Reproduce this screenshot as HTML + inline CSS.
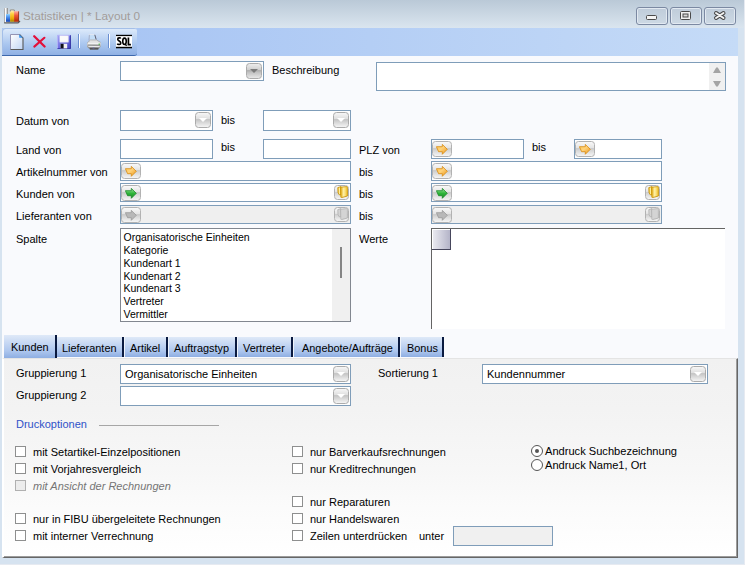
<!DOCTYPE html>
<html><head><meta charset="utf-8">
<style>
*{margin:0;padding:0;box-sizing:border-box}
html,body{width:745px;height:565px;overflow:hidden}
body{position:relative;background:#d6e3f0;font-family:"Liberation Sans",sans-serif;font-size:11px;color:#000}
.a{position:absolute}
.t{position:absolute;white-space:nowrap;line-height:13px}
#title{left:0;top:0;width:745px;height:28px;background:linear-gradient(#bac9d7,#dae5ef)}
.wb{position:absolute;top:7px;width:32px;height:18px;border:1px solid #7b89a2;border-radius:3px;background:linear-gradient(#bfccda,#cdd9e4);box-shadow:inset 0 0 0 1px #e2e9f1}
#strip{left:2px;top:28px;width:736px;height:28px;background:linear-gradient(90deg,#a3c1f3,#c5dbf7)}
#tb{left:2px;top:28px;width:135px;height:28px;border-radius:3px 3px 3px 0;background:linear-gradient(#e0ecfb,#a9c6ef 60%,#8fb0e4);border-bottom:1px solid #3d68ac;box-shadow:inset 1px 1px 0 #a4bfe8}
#content{left:2px;top:56px;width:736px;height:302px;background:#f9fafd}
#panel{left:2px;top:358px;width:736px;height:200px;background:linear-gradient(#f1f1f1,#f3f3f3 25%,#f7f7f7 55%,#fbfbfb 75%,#fff);border-right:1px solid #666;border-bottom:1px solid #666;border-top:1px solid #e4e4e4;border-left:2px solid #fff;box-shadow:inset -1px -1px 0 #9c9c9c}
#frm{left:0;top:0;width:745px;height:565px;border-right:1px solid #e6eaf1;border-bottom:1px solid #e6eaf1;pointer-events:none}
.in{position:absolute;background:#fff;border:1px solid #7f9db9}
.dd{position:absolute;width:16px;height:16px;border:1px solid #ababab;border-radius:3.5px;background:linear-gradient(#f6f6f6,#dfdfdf 42%,#c4c4c4 47%,#d2d2d2 62%,#f4f4f4 100%)}
.dd.k{background:linear-gradient(#ececec,#cfcfcf 42%,#aeaeae 47%,#c4c4c4 62%,#e6e6e6 100%)}
.dd:after{content:"";position:absolute;left:3px;top:5px;border-left:4px solid transparent;border-right:4px solid transparent;border-top:4px solid #7a7a7a}
.dd.w:after{border-top-color:#fff}
.ab{position:absolute;width:20px;height:16px;border:1px solid #b2b2b2;border-radius:3.5px;background:linear-gradient(#f8f8f8,#e4e4e4 42%,#cacaca 47%,#d8d8d8 62%,#f4f4f4)}
.cb{position:absolute;width:11px;height:11px;border:1px solid #8e8f8f;background:#fff}
.tab{position:absolute;top:337px;height:20px;background:linear-gradient(#dfe9f8,#adc6ee 70%,#8eaee2);border-right:2px solid #0a1a40}
.tab span{position:absolute;top:5px;white-space:nowrap;font-size:10.9px;color:#000}
</style></head><body>

<svg width="0" height="0" style="position:absolute">
<defs>
<linearGradient id="og" x1="0" y1="0" x2="1" y2="1"><stop offset="0" stop-color="#ffc850"/><stop offset="0.45" stop-color="#ffd27a"/><stop offset="1" stop-color="#ec9410"/></linearGradient>
<linearGradient id="gg" x1="0" y1="0" x2="0" y2="1"><stop offset="0" stop-color="#9ee89e"/><stop offset="0.5" stop-color="#2fb53a"/><stop offset="1" stop-color="#178a25"/></linearGradient>
<linearGradient id="yg" x1="0" y1="0" x2="1" y2="0"><stop offset="0" stop-color="#e0a810"/><stop offset="0.45" stop-color="#fff2a8"/><stop offset="1" stop-color="#f2c22a"/></linearGradient>
<symbol id="arr" viewBox="0 0 12 11"><path d="M0.4 2.7 L6.3 2.7 L6.3 0.4 L11.3 5.3 L6.3 10.3 L6.3 7.7 L2.6 7.7 Z"/></symbol>
<symbol id="fold" viewBox="0 0 11 12"><path d="M0.8 1.6 L4 0.6 L4.2 8.5 L2.2 8.8 L1 6.5 Z"/><path d="M3.6 1.2 L9.6 0.6 C10.2 0.6 10.4 1 10.4 1.6 L10.4 10 L4.6 11.6 C4 11.7 3.8 11.4 3.8 10.8 Z"/></symbol>
</defs></svg>
<div id="title" class="a"></div>
<div class="t" style="left:23px;top:9px;font-size:11.8px;color:#a29c9a;line-height:14px">Statistiken | * Layout 0</div>
<div class="wb" style="left:636px"></div>
<div class="wb" style="left:670px"></div>
<div class="wb" style="left:704px"></div>

<div id="strip" class="a"></div>
<div id="tb" class="a"></div>

<div id="content" class="a"></div>
<!-- title icon -->
<svg class="a" style="left:3px;top:7px" width="18" height="18" viewBox="0 0 18 18">
<defs>
<linearGradient id="ib" x1="0" y1="0" x2="0" y2="1"><stop offset="0" stop-color="#8ad0ff"/><stop offset="0.4" stop-color="#4a90f0"/><stop offset="1" stop-color="#1040b0"/></linearGradient>
<linearGradient id="iy" x1="0" y1="0" x2="0" y2="1"><stop offset="0" stop-color="#fffce0"/><stop offset="0.35" stop-color="#ffd040"/><stop offset="0.75" stop-color="#e8a800"/><stop offset="1" stop-color="#a08000"/></linearGradient>
<linearGradient id="ir" x1="0" y1="0" x2="0" y2="1"><stop offset="0" stop-color="#ffb0a0"/><stop offset="0.4" stop-color="#f05838"/><stop offset="1" stop-color="#b02800"/></linearGradient>
</defs>
<path d="M1.2 1 L4.6 1 L4.6 16 L1.2 16 Z" fill="#fafafa"/>
<path d="M1.5 16 L1.5 1.2" stroke="#b0b0b0" stroke-width="1"/>
<path d="M4.2 1 L4.2 7.5" stroke="#707070" stroke-width="1"/>
<rect x="3" y="7.1" width="4.1" height="7.7" fill="url(#ib)"/>
<rect x="7.1" y="2.6" width="4.4" height="12.2" fill="url(#iy)"/>
<path d="M7.3 4.5 L7.3 2.9 L11.3 2.9 L11.3 4.5" fill="none" stroke="#8a8a8a" stroke-width="1"/>
<rect x="11.1" y="4.2" width="4.8" height="10.6" fill="url(#ir)"/>
<path d="M15.6 4.4 L15.6 14.8" stroke="#803020" stroke-width="0.8"/>
<path d="M1.2 15.9 L15 15.9 L17 14" fill="none" stroke="#5a5a5a" stroke-width="1.3"/>
</svg>
<!-- window button glyphs -->
<svg class="a" style="left:645px;top:14px" width="13" height="7"><rect x="1.5" y="1.5" width="10" height="4" rx="1" fill="#f4f4f4" stroke="#4a4a4a" stroke-width="1"/></svg>
<svg class="a" style="left:679px;top:10px" width="13" height="11"><rect x="1.5" y="1.5" width="10" height="8" rx="1" fill="#f2f2f2" stroke="#4a4a4a" stroke-width="1"/><rect x="4" y="4" width="5" height="3" fill="#d8d8d8" stroke="#4a4a4a" stroke-width="1"/></svg>
<svg class="a" style="left:713px;top:10px" width="14" height="11"><path d="M3 3 L10.5 8 M10.5 3 L3 8" stroke="#4a4a4a" stroke-width="4" stroke-linecap="round"/><path d="M3 3 L10.5 8 M10.5 3 L3 8" stroke="#f2f2f2" stroke-width="2" stroke-linecap="round"/></svg>

<!-- toolbar icons -->
<svg class="a" style="left:9px;top:33px" width="16" height="18" viewBox="0 0 16 18">
<defs><linearGradient id="pg" x1="0" y1="0" x2="1" y2="1"><stop offset="0" stop-color="#fff"/><stop offset="1" stop-color="#c0d4f4"/></linearGradient></defs>
<path d="M1.5 1.5 L10.5 1.5 L14 5 L14 16.5 L1.5 16.5 Z" fill="url(#pg)"/>
<path d="M1.5 16.5 L1.5 1.5 L10.5 1.5" fill="none" stroke="#9494b4" stroke-width="1"/>
<path d="M10.5 1.5 L14 5 L14 16.5 L1.5 16.5" fill="none" stroke="#585858" stroke-width="1.1"/>
<path d="M10.2 1.2 L13.8 4.8 L10.2 4.8 Z" fill="#3c96f0"/>
</svg>
<svg class="a" style="left:32px;top:34px" width="16" height="16" viewBox="0 0 16 16"><path d="M2.2 2.3 L12.6 12.5" stroke="#e3103a" stroke-width="2.3" stroke-linecap="round"/><path d="M12.4 3.8 L2.3 12.6" stroke="#e3103a" stroke-width="2.1" stroke-linecap="round"/></svg>
<svg class="a" style="left:56px;top:34px" width="16" height="16" viewBox="0 0 16 16">
<defs><linearGradient id="fl" x1="0" y1="0" x2="1" y2="1"><stop offset="0" stop-color="#a8a8f4"/><stop offset="0.5" stop-color="#7272e4"/><stop offset="1" stop-color="#3c3cb8"/></linearGradient></defs>
<rect x="1.2" y="1" width="13.6" height="13.8" fill="url(#fl)"/>
<path d="M1.5 14.5 L1.5 1.3 L14.5 1.3" fill="none" stroke="#b8b8f8" stroke-width="0.8"/>
<path d="M14.5 1.3 L14.5 14.5 L1.5 14.5" fill="none" stroke="#3030a0" stroke-width="0.8"/>
<rect x="3.6" y="1.6" width="8.8" height="6.6" fill="#fafafa"/>
<path d="M12.3 1.8 L12.3 8.2 L3.8 8.2" stroke="#d8d8e8" stroke-width="0.6" fill="none"/>
<rect x="4.6" y="9.8" width="6.6" height="4.6" fill="#f0f0f0"/>
<rect x="4.6" y="9.8" width="3" height="4.6" fill="#101018"/>
</svg>
<div class="a" style="left:78px;top:34px;width:1px;height:14px;background:#6a8ed0"></div>
<div class="a" style="left:79px;top:34px;width:1px;height:14px;background:#fff"></div>
<svg class="a" style="left:86px;top:33px" width="16" height="18" viewBox="0 0 16 18">
<defs><linearGradient id="prg" x1="0" y1="0" x2="0" y2="1"><stop offset="0" stop-color="#f0f0f0"/><stop offset="0.5" stop-color="#c8c8c8"/><stop offset="1" stop-color="#6a6a6a"/></linearGradient></defs>
<path d="M2.6 1.6 L8.6 1.6 L9.8 7 L3.6 7.4 Z" fill="#c4def8"/>
<path d="M2.6 1.6 L8.6 1.6" stroke="#e8e8f0" stroke-width="0.8"/>
<path d="M8.8 1.8 L10.2 6.6" stroke="#505060" stroke-width="0.9"/>
<path d="M3 7.6 L3.4 1.8" stroke="#9090a8" stroke-width="0.6"/>
<path d="M1 10 L4.5 6.8 L10.5 6.8 L14.8 9.4 L14.8 13.6 L12.2 16.6 L4 16.6 L1 13.8 Z" fill="url(#prg)"/>
<path d="M1.2 10 L4.5 7 L10.5 7 L14.6 9.4" fill="none" stroke="#9a9a9a" stroke-width="0.7"/>
<path d="M2 10.2 L13.8 10.2" stroke="#fff" stroke-width="1"/>
<path d="M1.8 12.2 L14 12.4" stroke="#888" stroke-width="0.8"/>
<path d="M2.4 13.4 L13.6 13.6" stroke="#f4f4f4" stroke-width="0.9"/>
<path d="M4 15.8 L12.2 15.8" stroke="#4a4a4a" stroke-width="1.2"/>
<path d="M6.5 15 L8.5 15" stroke="#7070c0" stroke-width="0.8"/>
<rect x="12.6" y="10.6" width="1.2" height="1.2" fill="#30b030"/>
</svg>
<div class="a" style="left:108px;top:34px;width:1px;height:14px;background:#6a8ed0"></div>
<div class="a" style="left:109px;top:34px;width:1px;height:14px;background:#fff"></div>
<svg class="a" style="left:116px;top:34px" width="16" height="15" viewBox="0 0 16 15">
<rect x="0" y="1" width="16" height="12" fill="#fff"/>
<rect x="0" y="0.8" width="16" height="1.3" fill="#000"/>
<rect x="0" y="12.8" width="16" height="1.5" fill="#000"/>
<path d="M4.6 4.6 C4.4 3.6 1.7 3.4 1.7 5.2 C1.7 7 4.8 6.9 4.8 8.9 C4.8 10.9 1.8 10.9 1.3 9.6" fill="none" stroke="#000" stroke-width="1.6"/>
<ellipse cx="8.5" cy="7.3" rx="1.75" ry="3.2" fill="none" stroke="#000" stroke-width="1.6"/>
<path d="M8.8 9.8 L10.6 11.8" stroke="#000" stroke-width="1.3"/>
<path d="M12.4 3.5 L12.4 10.6 L14.9 10.6" fill="none" stroke="#000" stroke-width="1.7"/>
</svg>


<!-- labels -->
<div class="t" style="left:16px;top:64px">Name</div>
<div class="in" style="left:120px;top:61px;width:144px;height:20px"></div>
<div class="dd k" style="left:246px;top:63px"></div>
<div class="t" style="left:272px;top:64px">Beschreibung</div>
<div class="in" style="left:376px;top:62px;width:350px;height:29px"></div>

<div class="t" style="left:16px;top:115px">Datum von</div>
<div class="in" style="left:120px;top:110px;width:93px;height:21px"></div>
<div class="dd w" style="left:195px;top:112px"></div>
<div class="t" style="left:221px;top:114px">bis</div>
<div class="in" style="left:263px;top:110px;width:88px;height:21px"></div>
<div class="dd w" style="left:333px;top:112px"></div>

<div class="t" style="left:16px;top:144px">Land von</div>
<div class="in" style="left:120px;top:139px;width:93px;height:20px"></div>
<div class="t" style="left:221px;top:141px">bis</div>
<div class="in" style="left:263px;top:139px;width:88px;height:20px"></div>
<div class="t" style="left:359px;top:144px">PLZ von</div>
<div class="in" style="left:431px;top:139px;width:93px;height:20px"></div>
<div class="ab" style="left:432px;top:141px"></div>
<div class="t" style="left:532px;top:141px">bis</div>
<div class="in" style="left:574px;top:139px;width:88px;height:20px"></div>
<div class="ab" style="left:575px;top:141px"></div>

<div class="t" style="left:16px;top:166px">Artikelnummer von</div>
<div class="in" style="left:120px;top:161px;width:231px;height:20px"></div>
<div class="ab" style="left:121px;top:163px"></div>
<div class="t" style="left:359px;top:166px">bis</div>
<div class="in" style="left:431px;top:161px;width:231px;height:20px"></div>
<div class="ab" style="left:432px;top:163px"></div>

<div class="t" style="left:16px;top:188px">Kunden von</div>
<div class="in" style="left:120px;top:183px;width:231px;height:19px"></div>
<div class="ab" style="left:121px;top:185px"></div>
<div class="t" style="left:359px;top:188px">bis</div>
<div class="in" style="left:431px;top:183px;width:231px;height:19px"></div>
<div class="ab" style="left:432px;top:185px"></div>

<div class="t" style="left:16px;top:210px">Lieferanten von</div>
<div class="in" style="left:120px;top:205px;width:231px;height:19px;background:#efefef"></div>
<div class="ab" style="left:121px;top:207px"></div>
<div class="t" style="left:359px;top:210px">bis</div>
<div class="in" style="left:431px;top:205px;width:231px;height:19px;background:#efefef"></div>
<div class="ab" style="left:432px;top:207px"></div>

<svg class="a" style="left:436px;top:144px" width="12" height="11"><use href="#arr" fill="url(#og)" stroke="#d88a10" stroke-width="0.8"/></svg><svg class="a" style="left:579px;top:144px" width="12" height="11"><use href="#arr" fill="url(#og)" stroke="#d88a10" stroke-width="0.8"/></svg><svg class="a" style="left:125px;top:166px" width="12" height="11"><use href="#arr" fill="url(#og)" stroke="#d88a10" stroke-width="0.8"/></svg><svg class="a" style="left:436px;top:166px" width="12" height="11"><use href="#arr" fill="url(#og)" stroke="#d88a10" stroke-width="0.8"/></svg><svg class="a" style="left:125px;top:188px" width="12" height="11"><use href="#arr" fill="url(#gg)" stroke="#1a8a28" stroke-width="0.8"/></svg><svg class="a" style="left:436px;top:188px" width="12" height="11"><use href="#arr" fill="url(#gg)" stroke="#1a8a28" stroke-width="0.8"/></svg><svg class="a" style="left:125px;top:210px" width="12" height="11"><use href="#arr" fill="#b8b8b8" stroke="#999" stroke-width="0.8"/></svg><svg class="a" style="left:436px;top:210px" width="12" height="11"><use href="#arr" fill="#b8b8b8" stroke="#999" stroke-width="0.8"/></svg><div class="ab" style="left:334px;top:185px;width:15px;height:15px"></div><svg class="a" style="left:337px;top:186px" width="11" height="12"><use href="#fold" fill="url(#yg)" stroke="#c89000" stroke-width="0.8"/></svg><div class="ab" style="left:645px;top:185px;width:15px;height:15px"></div><svg class="a" style="left:648px;top:186px" width="11" height="12"><use href="#fold" fill="url(#yg)" stroke="#c89000" stroke-width="0.8"/></svg><div class="ab" style="left:334px;top:207px;width:15px;height:15px"></div><svg class="a" style="left:337px;top:208px" width="11" height="12"><use href="#fold" fill="#d4d4d4" stroke="#b0b0b0" stroke-width="0.8"/></svg><div class="ab" style="left:645px;top:207px;width:15px;height:15px"></div><svg class="a" style="left:648px;top:208px" width="11" height="12"><use href="#fold" fill="#d4d4d4" stroke="#b0b0b0" stroke-width="0.8"/></svg>
<div class="t" style="left:16px;top:233px">Spalte</div>
<div class="a" style="left:120px;top:228px;width:231px;height:94px;background:#fff;border:1px solid #828790"></div>
<div class="t" style="left:359px;top:233px">Werte</div>
<div class="a" style="left:431px;top:228px;width:294px;height:101px;background:#fff;border-left:1px solid #646464;border-top:1px solid #646464"></div>

<div id="panel" class="a"></div>

<div class="tab" style="left:4px;top:335px;width:53px;height:23px"><span style="left:7px;top:6px">Kunden</span></div>
<div class="tab" style="left:57px;width:67px"><span style="left:5px">Lieferanten</span></div>
<div class="tab" style="border-left:1.5px solid #eef3fa;left:124px;width:44px"><span style="left:5px">Artikel</span></div>
<div class="tab" style="border-left:1.5px solid #eef3fa;left:168px;width:69px"><span style="left:5px">Auftragstyp</span></div>
<div class="tab" style="border-left:1.5px solid #eef3fa;left:237px;width:56px"><span style="left:5px">Vertreter</span></div>
<div class="tab" style="border-left:1.5px solid #eef3fa;left:293px;width:107px"><span style="left:8px">Angebote/Aufträge</span></div>
<div class="tab" style="border-left:1.5px solid #eef3fa;left:400px;width:44px"><span style="left:6px">Bonus</span></div>


<!-- listbox items -->
<div class="a" style="left:332px;top:229px;width:18px;height:92px;background:#f0f0f0"></div>
<div class="a" style="left:340px;top:247px;width:2px;height:31px;background:#858585"></div>
<div class="t" style="left:123.5px;top:231px;font-size:10.5px;line-height:12.85px">Organisatorische Einheiten<br>Kategorie<br>Kundenart 1<br>Kundenart 2<br>Kundenart 3<br>Vertreter<br>Vermittler</div>
<div class="a" style="left:432px;top:229px;width:19px;height:21px;background:linear-gradient(90deg,#ececf2,#b4b4c8);border-right:1px solid #46465c;border-bottom:1px solid #46465c;box-shadow:inset 1px 1px 0 #fff"></div>
<div class="a" style="left:709px;top:63px;width:16px;height:27px;background:#f0f0f0"></div>
<svg class="a" style="left:712px;top:66px" width="10" height="22"><path d="M1 7 L9 7 L5.8 1.5 L4.2 1.5 Z M1 15 L9 15 L5.8 20.5 L4.2 20.5 Z" fill="#a4a4a4"/></svg>

<!-- panel contents -->
<div class="t" style="left:16px;top:367px">Gruppierung 1</div>
<div class="in" style="left:120px;top:364px;width:231px;height:20px"></div>
<div class="t" style="left:125px;top:368px">Organisatorische Einheiten</div>
<div class="dd w" style="left:333px;top:366px"></div>
<div class="t" style="left:16px;top:389px">Gruppierung 2</div>
<div class="in" style="left:120px;top:386px;width:231px;height:20px"></div>
<div class="dd w" style="left:333px;top:388px"></div>
<div class="t" style="left:378px;top:367px">Sortierung 1</div>
<div class="in" style="left:482px;top:364px;width:226px;height:20px"></div>
<div class="t" style="left:487px;top:368px">Kundennummer</div>
<div class="dd w" style="left:690px;top:366px"></div>

<div class="t" style="left:16px;top:418px;color:#2f52c8">Druckoptionen</div>
<div class="a" style="left:99px;top:425px;width:120px;height:1px;background:#a6a6a6"></div>

<div class="cb" style="left:15px;top:446px"></div><div class="t" style="left:33px;top:446px">mit Setartikel-Einzelpositionen</div>
<div class="cb" style="left:15px;top:463px"></div><div class="t" style="left:33px;top:463px">mit Vorjahresvergleich</div>
<div class="cb" style="left:15px;top:480px;background:#ececec;border-color:#b0b0b0"></div><div class="t" style="left:33px;top:480px;color:#757575;font-style:italic">mit Ansicht der Rechnungen</div>
<div class="cb" style="left:15px;top:513px"></div><div class="t" style="left:33px;top:513px">nur in FIBU übergeleitete Rechnungen</div>
<div class="cb" style="left:15px;top:530px"></div><div class="t" style="left:33px;top:530px">mit interner Verrechnung</div>

<div class="cb" style="left:292px;top:446px"></div><div class="t" style="left:310px;top:446px">nur Barverkaufsrechnungen</div>
<div class="cb" style="left:292px;top:463px"></div><div class="t" style="left:310px;top:463px">nur Kreditrechnungen</div>
<div class="cb" style="left:292px;top:496px"></div><div class="t" style="left:310px;top:496px">nur Reparaturen</div>
<div class="cb" style="left:292px;top:513px"></div><div class="t" style="left:310px;top:513px">nur Handelswaren</div>
<div class="cb" style="left:292px;top:530px"></div><div class="t" style="left:310px;top:530px">Zeilen unterdrücken</div>
<div class="t" style="left:419px;top:530px">unter</div>
<div class="in" style="left:453px;top:526px;width:100px;height:20px;background:#f0f0f0"></div>

<div class="a" style="left:531px;top:445px;width:12px;height:12px;border:1px solid #555;border-radius:50%;background:#fff"></div>
<div class="a" style="left:535px;top:449px;width:4px;height:4px;border-radius:50%;background:#555"></div>
<div class="t" style="left:545px;top:445px;font-size:11.1px">Andruck Suchbezeichnung</div>
<div class="a" style="left:531px;top:459px;width:12px;height:12px;border:1px solid #555;border-radius:50%;background:#fff"></div>
<div class="t" style="left:545px;top:459px;font-size:11.1px">Andruck Name1, Ort</div>
<div id="frm" class="a"></div>
</body></html>
